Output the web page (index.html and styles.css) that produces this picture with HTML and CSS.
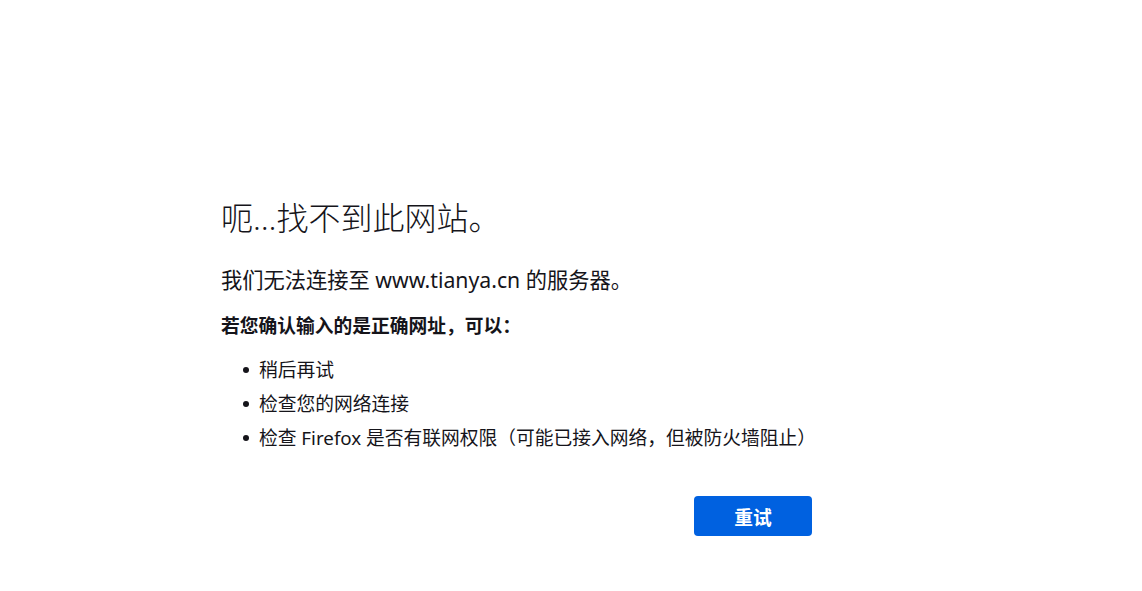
FILE: index.html
```html
<!DOCTYPE html>
<html lang="zh-CN">
<head>
<meta charset="utf-8">
<title>找不到服务器</title>
<link rel="stylesheet" href="styles.css">
</head>
<body>
<main class="page">
  <div class="container">
    <h1 class="title">呃…找不到此网站。</h1>
    <p class="desc">我们无法连接至 www.tianya.cn 的服务器。</p>
    <p class="lead">若您确认输入的是正确网址，可以：</p>
    <ul class="tips">
      <li>稍后再试</li>
      <li>检查您的网络连接</li>
      <li>检查 Firefox 是否有联网权限（可能已接入网络，但被防火墙阻止）</li>
    </ul>
    <div class="actions">
      <button class="retry" type="button">重试</button>
    </div>
  </div>
</main>
</body>
</html>
```

FILE: styles.css
```css
html, body {
  margin: 0;
  padding: 0;
  background: #ffffff;
}

body {
  font-family: "Noto Sans", "Noto Sans CJK SC", sans-serif;
  color: #15141a;
  font-size: 18.75px;
}

.page {
  padding-top: 198px;
}

.container {
  width: 700px;
  margin: 0 auto;
  padding-right: 109px;
  box-sizing: border-box;
}

.title {
  margin: 0;
  font-size: 32px;
  line-height: 40px;
  font-weight: 300;
}

.desc {
  margin: 27px 0 0;
  font-size: 21.25px;
  line-height: 30px;
}

.lead {
  margin: 17px 0 0;
  font-size: 18.75px;
  line-height: 28px;
  font-weight: 700;
}

.tips {
  list-style: none;
  margin: 13px 0 0;
  padding: 0 0 0 22px;
}

.tips li {
  display: flex;
  align-items: center;
  line-height: 34px;
  white-space: nowrap;
}

.tips li::before {
  content: "";
  flex: none;
  width: 6px;
  height: 6px;
  border-radius: 50%;
  background: #15141a;
  margin-right: 10px;
}

.actions {
  display: flex;
  justify-content: flex-end;
  margin-top: 41px;
}

.retry {
  width: 118px;
  height: 40px;
  border: none;
  border-radius: 4px;
  background: #0061e0;
  color: #ffffff;
  font-family: "Noto Sans", "Noto Sans CJK SC", sans-serif;
  font-size: 18.75px;
  font-weight: 700;
  padding: 0;
}
```
